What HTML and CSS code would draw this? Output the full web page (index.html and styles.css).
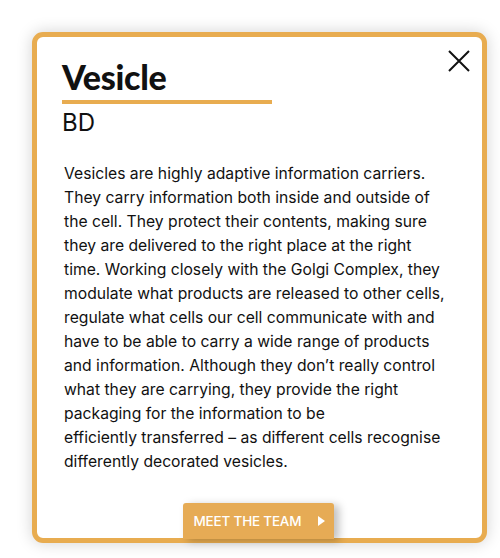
FILE: index.html
```html
<!DOCTYPE html>
<html>
<head>
<meta charset="utf-8">
<link rel="stylesheet" href="styles.css">
</head>
<body>
<div class="card">
  <button class="close" aria-label="Close">
    <svg width="22" height="22" viewBox="0 0 22 22"><path d="M1 1 L21 21 M21 1 L1 21" stroke="#111" stroke-width="2" fill="none"/></svg>
  </button>
  <h1 class="title">Vesicle</h1>
  <div class="rule"></div>
  <div class="sub">BD</div>
  <p class="body">Vesicles are highly adaptive information carriers.<br>They carry information both inside and outside of<br>the cell. They protect their contents, making sure<br>they are delivered to the right place at the right<br>time. Working closely with the Golgi Complex, they<br>modulate what products are released to other cells,<br>regulate what cells our cell communicate with and<br>have to be able to carry a wide range of products<br>and information. Although they don’t really control<br>what they are carrying, they provide the right<br>packaging for the information to be<br>efficiently transferred – as different cells recognise<br>differently decorated vesicles.</p>
  <div class="actions">
    <a class="btn">MEET THE TEAM <span class="tri"></span></a>
  </div>
</div>
</body>
</html>
```
FILE: styles.css
```css
html, body { margin: 0; padding: 0; background: #fff; }
body { padding: 32px; font-family: "Lato", "Open Sans", sans-serif; color: #111; }
.card {
  position: relative;
  box-sizing: border-box;
  width: 455px;
  height: 511px;
  border: 5px solid #e8ac50;
  border-radius: 11px;
  background: #fff;
  box-shadow: 0 0 16px rgba(0,0,0,0.18);
  padding: 20px 25px 0 25px;
  display: flex;
  flex-direction: column;
}
.close {
  position: absolute;
  top: 13px; right: 12px;
  background: none; border: 0; padding: 0; width: 22px; height: 22px;
}
.title { margin: 0; font-size: 34px; font-weight: 900; line-height: 40px; letter-spacing: -0.3px; }
.rule { width: 210px; height: 4px; background: #e8ac50; margin-top: 3px; }
.sub { font-family: "Inter", sans-serif; font-size: 24px; line-height: 30px; margin-top: 4px; }
.body { font-family: "Inter", "Lato", sans-serif; margin: 24px 0 0 2px; font-size: 15.7px; line-height: 24px; color: #111; }
.actions { margin-top: auto; display: flex; justify-content: center; padding-right: 3px; }
.btn {
  display: flex; align-items: center; gap: 17px;
  background: #e6ab55; color: #fff;
  height: 36px; width: 151px; box-sizing: border-box; padding: 0 0 0 11px;
  border-radius: 3px 3px 0 0;
  font-family: "Inter", sans-serif;
  font-size: 13.5px; font-weight: 500; letter-spacing: -0.2px;
  box-shadow: 5px 2px 8px rgba(0,0,0,0.25);
  margin-bottom: -1px;
}
.tri { width: 0; height: 0; border-left: 7px solid #fff; border-top: 5px solid transparent; border-bottom: 5px solid transparent; }
```
